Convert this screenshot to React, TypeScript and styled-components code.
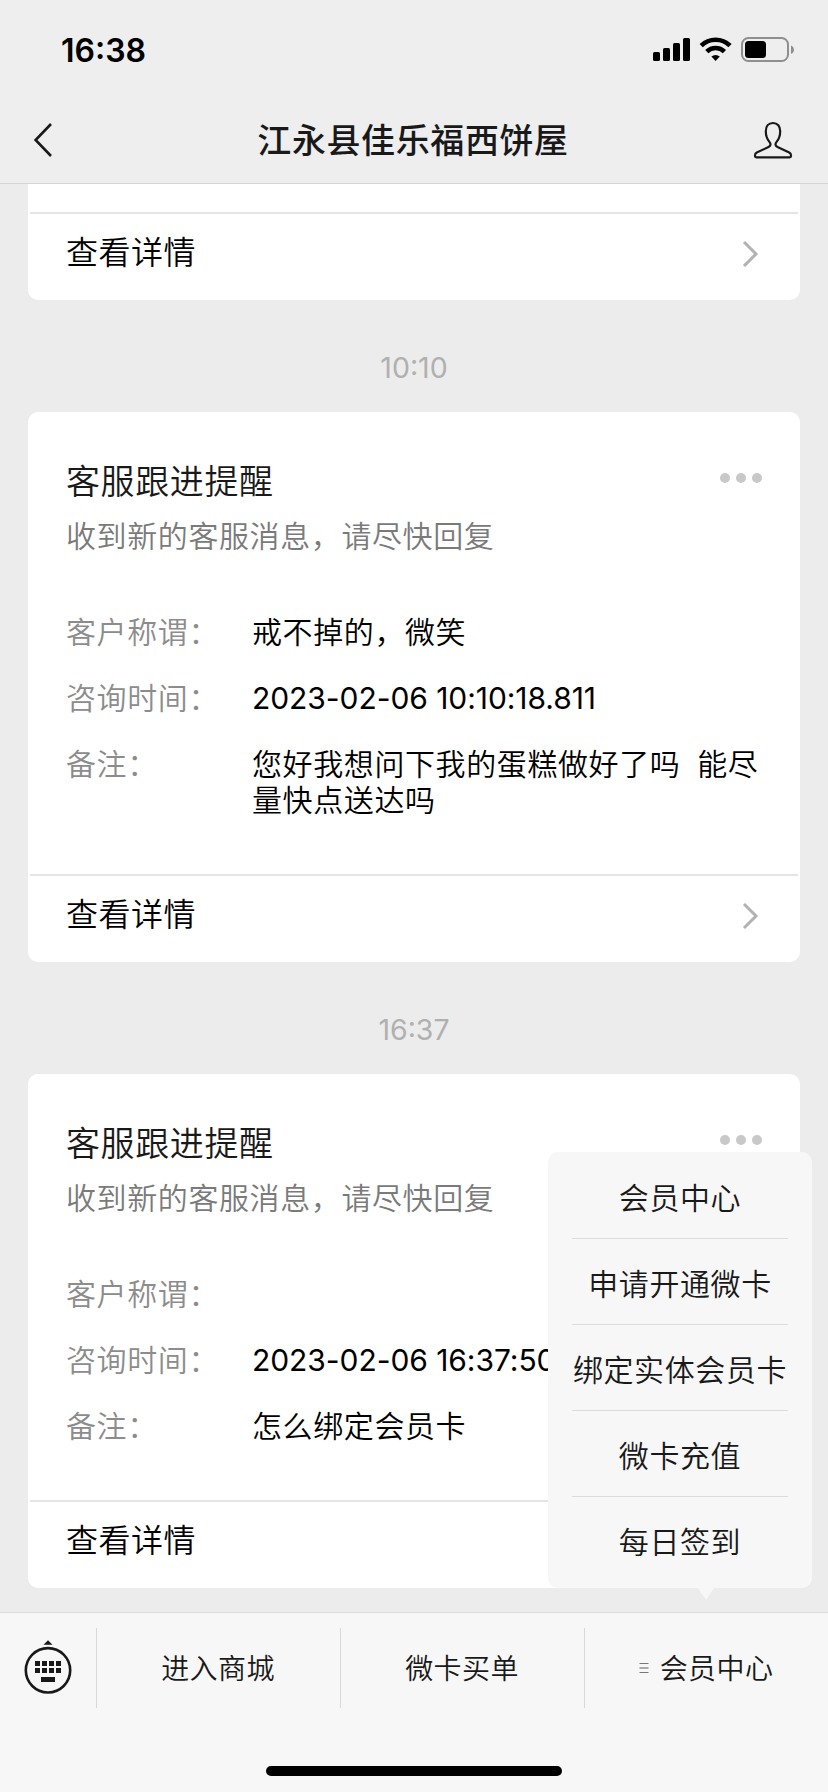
import React from "react";
import styled, { createGlobalStyle } from "styled-components";

const GlobalStyle = createGlobalStyle`
  * { box-sizing: border-box; }
  html, body { margin: 0; padding: 0; }
  body {
    background: #ececec;
    font-family: Inter, "Noto Sans CJK SC", sans-serif;
    font-weight: 350;
    color: #000;
  }
`;

const Screen = styled.div`
  width: 828px;
  height: 1792px;
  display: flex;
  flex-direction: column;
  overflow: hidden;
  background: #ececec;
`;

const Header = styled.header`
  flex: none;
  height: 184px;
  background: #eeeeee;
  border-bottom: 1px solid #d5d5d5;
`;

const StatusBar = styled.div`
  height: 100px;
  padding: 0 33px 0 61px;
  display: flex;
  align-items: center;
  justify-content: space-between;
`;

const Clock = styled.span`
  padding-top: 1px;
  font-size: 32px;
  font-weight: 600;
  line-height: 40px;
`;

const NavBar = styled.div`
  height: 80px;
  padding: 0 35px 0 33px;
  display: flex;
  align-items: center;
  justify-content: space-between;
`;

const NavTitle = styled.h1`
  margin: 0;
  padding-top: 1px;
  font-size: 34px;
  font-weight: 500;
  line-height: 48px;
  letter-spacing: 0.6px;
  color: #191919;
`;

const Feed = styled.main`
  flex: none;
  height: 1428px;
  padding: 0 28px;
  display: flex;
  flex-direction: column;
  overflow: hidden;
`;

const Card = styled.section<{ $cut?: boolean }>`
  background: #fff;
  border-radius: ${(p) => (p.$cut ? "0 0 10px 10px" : "10px")};
  padding-top: ${(p) => (p.$cut ? "28px" : "0")};
`;

const CardBody = styled.div`
  padding: 46px 37px 56px 38px;
`;

const CardHead = styled.div`
  display: flex;
  justify-content: space-between;
  align-items: center;
  height: 48px;
`;

const CardTitle = styled.h2`
  margin: 0;
  font-size: 34px;
  font-weight: inherit;
  line-height: 48px;
  letter-spacing: 0.6px;
  color: #191919;
`;

const Dots = styled.div`
  display: flex;
  gap: 6px;
  margin: 0 1px 8px 0;
`;

const Dot = styled.i`
  width: 10px;
  height: 10px;
  border-radius: 50%;
  background: #c7c7cc;
`;

const Summary = styled.p`
  margin: 9px 0 57px;
  font-size: 30px;
  line-height: 42px;
  letter-spacing: 0.6px;
  color: #7a7a7a;
`;

const Fields = styled.dl`
  margin: 0;
  display: grid;
  grid-template-columns: 186px 1fr;
  row-gap: 30px;
  font-size: 30px;
  line-height: 36px;
  letter-spacing: 0.6px;
`;

const Label = styled.dt`
  color: #8c8c8c;
`;

const Value = styled.dd<{ $digits?: boolean }>`
  margin: 0;
  min-height: 36px;
  white-space: pre-wrap;
  word-spacing: ${(p) => (p.$digits ? "0" : "-0.6px")};
  letter-spacing: ${(p) => (p.$digits ? "-0.06px" : "0.6px")};
  font-weight: ${(p) => (p.$digits ? "400" : "inherit")};
`;

const CardFoot = styled.div`
  height: 88px;
  margin: 0 2px;
  padding: 0 39px 6px 36px;
  border-top: 2px solid #e5e5e5;
  display: flex;
  align-items: center;
  justify-content: space-between;
`;

const FootLabel = styled.span`
  padding-bottom: 8px;
  font-size: 32px;
  letter-spacing: 0.5px;
`;

const Timestamp = styled.time`
  height: 112px;
  display: flex;
  align-items: center;
  justify-content: center;
  padding-top: 23px;
  font-size: 28.5px;
  font-weight: 400;
  color: #b0b0b0;
`;

const BottomBar = styled.footer`
  flex: none;
  height: 180px;
  background: #f7f7f7;
  border-top: 1px solid #dcdcdc;
  padding-top: 15px;
  display: flex;
  flex-direction: column;
  align-items: center;
`;

const Tabs = styled.nav`
  width: 100%;
  height: 80px;
  display: grid;
  grid-template-columns: 96px repeat(3, 244px);
`;

const Tab = styled.div`
  position: relative;
  display: flex;
  align-items: center;
  justify-content: center;
  gap: 11px;
  font-size: 28px;
  letter-spacing: 0.4px;
  color: #191919;

  & + & {
    border-left: 1px solid #dadada;
  }
`;

const TabLabel = styled.span`
  padding: 0 1px 2px 0;
`;

const HomeIndicator = styled.div`
  width: 296px;
  height: 10px;
  margin-top: 58px;
  border-radius: 5px;
  background: #000;
`;

const Menu = styled.div`
  position: absolute;
  right: 16px;
  bottom: 120px;
  width: 264px;
  height: 436px;
  padding: 1px 24px 0;
  border-radius: 10px;
  background: #f7f7f7;

  &::after {
    content: "";
    position: absolute;
    left: 150px;
    top: 100%;
    border: 8px solid transparent;
    border-top: 12px solid #f7f7f7;
    border-bottom: 0;
  }
`;

const MenuItem = styled.div`
  height: 86px;
  display: flex;
  align-items: center;
  justify-content: center;
  font-size: 30px;
  letter-spacing: 0.6px;
  white-space: nowrap;

  &:not(:last-child) {
    border-bottom: 1px solid #dcdcdc;
  }
`;

const StatusIcons = () => (
  <svg width="143" height="26" viewBox="0 0 143 26">
    <rect x="1" y="15" width="7" height="9" rx="1.6" />
    <rect x="11" y="11" width="7" height="13" rx="1.6" />
    <rect x="21" y="6" width="7" height="18" rx="1.6" />
    <rect x="31" y="1" width="7" height="23" rx="1.6" />
    <g fill="none" stroke="#000" strokeWidth="4.6">
      <path d="M49.2 8.6a20.6 20.6 0 0 1 28.8 0" />
      <path d="M54.8 14.6a12.4 12.4 0 0 1 17.6 0" />
    </g>
    <path d="M59.4 19.6a6 6 0 0 1 8.4 0L63.6 24z" />
    <rect x="90" y="1" width="46" height="23" rx="6.5" fill="none" stroke="#8f8f8f" strokeWidth="2" />
    <rect x="93" y="4" width="21" height="17" rx="3.5" />
    <path d="M139 8.4c4 1.6 4 7 0 8.600z" fill="#8f8f8f" />
  </svg>
);

const BackIcon = () => (
  <svg width="40" height="40" viewBox="0 0 40 40" fill="none" stroke="#191919" strokeWidth="2.6">
    <path d="M18 4 2.600 20 18 36" />
  </svg>
);

const PersonIcon = () => (
  <svg width="40" height="40" viewBox="0 0 40 40" fill="none" stroke="#191919" strokeWidth="2.2" strokeLinejoin="round">
    <path d="M20 3c-4.600 0-7.200 3.300-7.200 8.300 0 4.600 1.300 7.900 3.600 10.600 1.700 2 1.400 4-.9 5.100L3.800 32.600C2.400 33.300 2 34.100 2 35.600V36c0 .8.500 1.300 1.400 1.300h33.200c.9 0 1.400-.5 1.400-1.300v-.4c0-1.500-.4-2.300-1.800-3L24.500 27c-2.300-1.100-2.600-3.100-.9-5.100 2.300-2.700 3.600-6 3.600-10.600C27.200 6.300 24.600 3 20 3z" />
  </svg>
);

const ArrowIcon = () => (
  <svg width="18" height="28" viewBox="0 0 18 28" fill="none" stroke="#b2b2b2" strokeWidth="3">
    <path d="M3 2 15 14 3 26" />
  </svg>
);

const KeyboardIcon = () => (
  <svg width="48" height="60" viewBox="0 0 48 60" fill="#191919">
    <path d="M24 2.200 28.500 6.800h-9z" />
    <circle cx="24" cy="32.300" r="22.200" fill="none" stroke="#191919" strokeWidth="2.600" />
    {[23, 30].map((y) => [11, 18, 25, 32].map((x) => <rect key={`${x}-${y}`} x={x} y={y} width="5" height="5" />))}
    <rect x="17" y="39" width="14" height="5" />
  </svg>
);

const MenuLinesIcon = () => (
  <svg width="10" height="12" viewBox="0 0 10 12">
    <rect x="0.500" y="1" width="9" height="1" fill="#777" />
    <rect x="0.500" y="5" width="9" height="2" fill="#aaa" />
    <rect x="0.500" y="10" width="9" height="1" fill="#777" />
  </svg>
);

const DetailLink = () => (
  <CardFoot>
    <FootLabel>查看详情</FootLabel>
    <ArrowIcon />
  </CardFoot>
);

type Notice = { name: string; time: string; note: string };

const NoticeCard = ({ name, time, note }: Notice) => (
  <Card>
    <CardBody>
      <CardHead>
        <CardTitle>客服跟进提醒</CardTitle>
        <Dots>
          <Dot />
          <Dot />
          <Dot />
        </Dots>
      </CardHead>
      <Summary>收到新的客服消息，请尽快回复</Summary>
      <Fields>
        <Label>客户称谓：</Label>
        <Value>{name}</Value>
        <Label>咨询时间：</Label>
        <Value $digits>{time}</Value>
        <Label>备注：</Label>
        <Value>{note}</Value>
      </Fields>
    </CardBody>
    <DetailLink />
  </Card>
);

const menuItems = ["会员中心", "申请开通微卡", "绑定实体会员卡", "微卡充值", "每日签到"];

export default function App() {
  return (
    <Screen>
      <GlobalStyle />
      <Header>
        <StatusBar>
          <Clock>16:38</Clock>
          <StatusIcons />
        </StatusBar>
        <NavBar>
          <BackIcon />
          <NavTitle>江永县佳乐福西饼屋</NavTitle>
          <PersonIcon />
        </NavBar>
      </Header>
      <Feed>
        <Card $cut>
          <DetailLink />
        </Card>
        <Timestamp>10:10</Timestamp>
        <NoticeCard
          name="戒不掉的，微笑"
          time="2023-02-06 10:10:18.811"
          note="您好我想问下我的蛋糕做好了吗  能尽量快点送达吗"
        />
        <Timestamp>16:37</Timestamp>
        <NoticeCard name="" time="2023-02-06 16:37:50" note="怎么绑定会员卡" />
      </Feed>
      <BottomBar>
        <Tabs>
          <Tab>
            <KeyboardIcon />
          </Tab>
          <Tab>
            <TabLabel>进入商城</TabLabel>
          </Tab>
          <Tab>
            <TabLabel>微卡买单</TabLabel>
          </Tab>
          <Tab>
            <MenuLinesIcon />
            <TabLabel>会员中心</TabLabel>
            <Menu>
              {menuItems.map((item) => (
                <MenuItem key={item}>{item}</MenuItem>
              ))}
            </Menu>
          </Tab>
        </Tabs>
        <HomeIndicator />
      </BottomBar>
    </Screen>
  );
}
